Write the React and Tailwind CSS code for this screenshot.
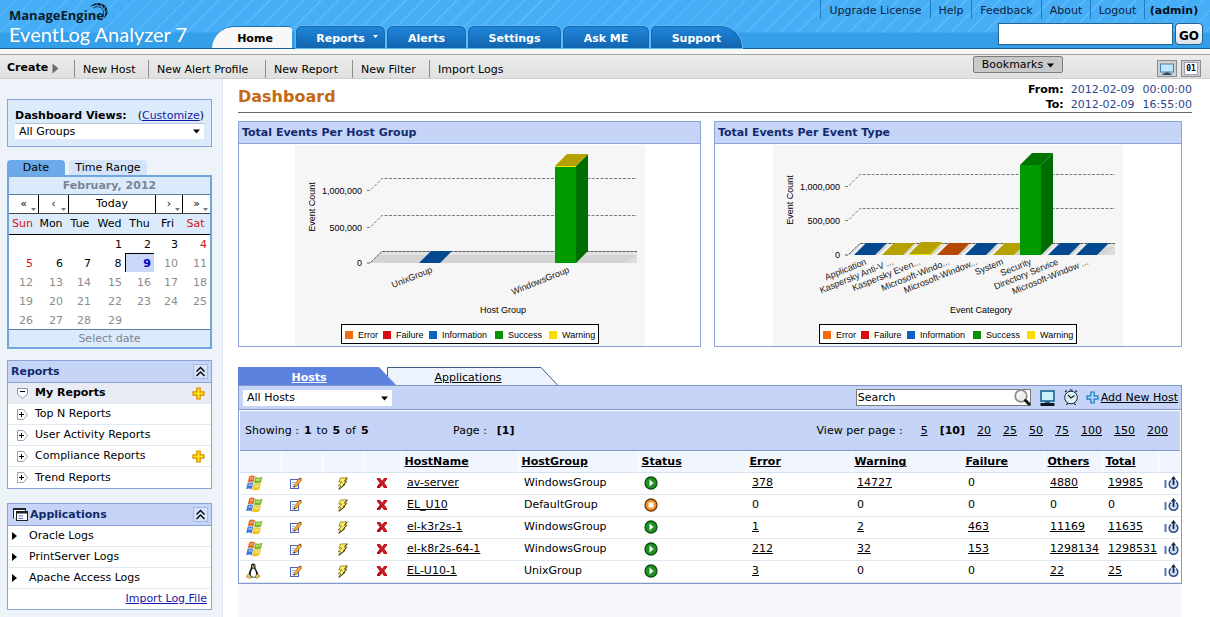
import React from 'react';

const SANS = "font-['DejaVu_Sans',Verdana,sans-serif]";

/* ---------- icons ---------- */

function WindowsIcon() {
  return (
    <svg width="17" height="16" viewBox="0 0 17 16" aria-label="Windows host">
      <path d="M3.200 1.400C5.100 0 7 .3 9 1.400L7.600 7.700C5.800 6.600 4 6.500 1.700 7.700Z" fill="#e2631f" />
      <path d="M9 1.800C11.500 3 13.700 3 16.500 1.500L15 7.700C12.600 9 10.100 8.900 7.600 7.700Z" fill="#7cb82c" />
      <path d="M1.600 7.900C3.700 6.700 5.700 6.900 7.600 8L6 14.400C4.100 13.200 2.200 13.100.1 14.200Z" fill="#3f74d9" />
      <path d="M7.600 8C10 9.200 12.400 9.200 15 7.900L13.500 14.200C10.800 15.700 8.500 15.600 6 14.400Z" fill="#f2c31c" />
      <path d="M4.200 2.300C5.600 1.600 6.600 1.700 7.700 2.300L7 5C6 4.400 5 4.400 3.500 5Z" fill="#f39b62" />
      <path d="M10.200 3.500C12 4.200 13.200 4.100 15 3.300L14.400 5.300C12.600 6 11.500 5.900 9.700 5.400Z" fill="#b5e06b" />
      <path d="M2.700 8.900C4 8.400 5 8.500 6.300 9L5.700 11.200C4.500 10.700 3.500 10.700 2.100 11.200Z" fill="#8fb3f5" />
      <path d="M8.800 9.800C10.400 10.400 11.800 10.400 13.500 9.700L12.900 12C11.200 12.700 9.900 12.600 8.200 12Z" fill="#fbe26b" />
      <path d="M9.200 1.500L6 14.400M1.600 7.900C3.700 6.700 5.700 6.900 7.600 8C10 9.200 12.400 9.200 15 7.900" fill="none" stroke="#f7f1e4" strokeWidth=".7" />
    </svg>
  );
}

function LinuxIcon() {
  return (
    <svg width="15" height="16" viewBox="0 0 15 16" aria-label="Linux host">
      <path d="M7.200.5C5.500.5 4.900 1.700 5 3.200C5.100 5 4.800 5.500 3.900 7C3 8.500 2.600 10.500 2.800 12L5 14.500H10L12 12C12.200 10 11.400 8.300 10.500 7C9.600 5.700 9.500 5 9.500 3.200C9.500 1.500 8.800.5 7.200.5Z" fill="#161616" />
      <path d="M7.200 5.600C6.100 5.900 5.900 7 5.100 8.600C4.500 10.200 4.800 12.300 5.600 13.300C6.600 14 8.600 14 9.500 13.200C10.200 12 10.200 10 9.600 8.500C9 7 8.500 5.800 7.200 5.600Z" fill="#fff" />
      <path d="M6 3.900L7.300 3.400L8.700 4L7.300 5.200Z" fill="#e6b422" />
      <circle cx="6.500" cy="2.900" r=".6" fill="#fff" />
      <circle cx="8.100" cy="2.900" r=".6" fill="#fff" />
      <path d="M2.800 10.800L5.600 14.200C5.400 15.600 3.600 15.500 2.600 15L.6 14.300C.3 13.500.9 13 1 12.200Z" fill="#dfc262" stroke="#8a7020" strokeWidth=".5" />
      <path d="M11.700 10.900L9.700 12.500L9.300 14.400C9.600 15.600 11.200 15.500 12 14.700L14.200 13.300C13.600 12.700 13.200 12.300 13 11.500Z" fill="#dfc262" stroke="#8a7020" strokeWidth=".5" />
    </svg>
  );
}

function EditIcon() {
  return (
    <svg width="13" height="13" viewBox="0 0 13 13">
      <rect x="1.500" y="2.500" width="8" height="9" fill="#fff" stroke="#4a63b5" />
      <path d="M3 5.500H6M3 7.500H5M3 9.500H5" stroke="#9fb0dc" />
      <path d="M4.800 10.300L5.500 7.700L10 1.300L12.400 3.100L7.600 9.300Z" fill="#f9ab2b" stroke="#7a4a10" strokeWidth=".6" />
      <path d="M4.600 10.500L5.300 8.800L6.400 9.600Z" fill="#222" />
      <path d="M10.200 1.300L11 .5L12.800 1.900L12.200 2.800Z" fill="#7b3b16" />
    </svg>
  );
}

function BoltIcon() {
  return (
    <svg width="13" height="13" viewBox="0 0 13 13">
      <path d="M4.500 1L11.300 .8L8.300 4.300L10.800 4.100L7.300 7.500L8.800 7.600L2.600 12.300L4.700 8.700L2 8.800L6 5L2.800 5.100Z" fill="#fff05a" stroke="#6e6312" strokeWidth=".7" strokeLinejoin="round" />
      <path d="M10.900 4.300L7.700 7.600M8.700 7.800L3 12.200M11.200 1L8.700 4" stroke="#1f1c05" strokeWidth=".9" />
    </svg>
  );
}

function DeleteIcon() {
  return (
    <svg width="12" height="12" viewBox="0 0 12 12">
      <path d="M1 1H4L6 3.700L8.200 1H11V2.500L8.200 5.800L11 9.400V11H8L6 8.200L3.800 11H1V9.500L3.800 5.900L1 2.500Z" fill="#b80d14" />
      <path d="M2 1.500L9.800 10.300M9.800 1.700L6.800 5" stroke="#e0474a" strokeWidth=".8" />
    </svg>
  );
}

function StatusIcon({ running }) {
  return running ? (
    <svg width="14" height="14" viewBox="0 0 14 14" aria-label="Running">
      <circle cx="7" cy="7" r="6" fill="#1f9423" stroke="#0c4d10" strokeWidth="1.300" />
      <path d="M5.500 3.500L9.500 7L5.500 10.500Z" fill="#fff" />
    </svg>
  ) : (
    <svg width="14" height="14" viewBox="0 0 14 14" aria-label="Stopped">
      <circle cx="7" cy="7" r="6" fill="#f3922a" stroke="#6b3706" strokeWidth="1.300" />
      <rect x="4.500" y="4.500" width="5" height="5" fill="#fff" />
    </svg>
  );
}

function PowerIcon() {
  return (
    <svg width="15" height="14" viewBox="0 0 15 14">
      <path d="M1.500 4V12" stroke="#5b7bab" strokeWidth="2" />
      <path d="M6.900 4.600A4.300 4.300 0 1 0 12.100 4.600" fill="#cfe0f6" stroke="#2b4a84" strokeWidth="1.500" />
      <path d="M9.500 2V9" stroke="#14264f" strokeWidth="1.800" />
      <path d="M6.800 3.400L9.500 0L12.200 3.400Z" fill="#14264f" />
    </svg>
  );
}

function PlusIcon({ blue }) {
  return (
    <svg width="13" height="13" viewBox="0 0 13 13">
      <path d="M4.800 1H8.200V4.800H12V8.200H8.200V12H4.800V8.200H1V4.800H4.800Z" fill={blue ? '#a9d8fb' : '#ffe614'} stroke={blue ? '#2377c4' : '#d98b00'} strokeWidth="1.200" />
    </svg>
  );
}

function ExpandIcon() {
  return (
    <svg width="11" height="11" viewBox="0 0 11 11">
      <path d="M.5.500H6.500L10.500 5.500L6.500 10.500H.5Z" fill="#fff" stroke="#93a3b3" />
      <path d="M2 5.500H7M4.500 3V8" stroke="#000" />
    </svg>
  );
}

function OpenIcon() {
  return (
    <svg width="11" height="11" viewBox="0 0 11 11">
      <path d="M.5.500H10.500V6L5.500 10.500L.5 6Z" fill="#fff" stroke="#8595a8" />
      <path d="M3 3.500H8" stroke="#000" />
    </svg>
  );
}

function CollapseIcon() {
  return (
    <svg width="15" height="15" viewBox="0 0 15 15">
      <rect x=".5" y=".5" width="14" height="14" fill="#d6e1fb" stroke="#7f98d4" strokeDasharray="1 1" />
      <path d="M3.500 7.500L7.500 3.500L11.500 7.500M3.500 12L7.500 8L11.500 12" fill="none" stroke="#000" strokeWidth="1.400" />
    </svg>
  );
}

function WindowsStackIcon() {
  return (
    <svg width="15" height="13" viewBox="0 0 15 13">
      <path d="M.5 10.500V.5H12.500V3" fill="#fff" stroke="#222" />
      <path d="M0 1H13" stroke="#222" strokeWidth="2" />
      <rect x="3.500" y="3.500" width="11" height="9" fill="#fff" stroke="#222" />
      <path d="M3 4.500H15" stroke="#222" strokeWidth="2" />
      <path d="M5.500 8H10M5.500 10.500H10" stroke="#5479b5" />
    </svg>
  );
}

function MonitorIcon({ small }) {
  return small ? (
    <svg width="16" height="12" viewBox="0 0 16 12">
      <rect x="1.500" y="1" width="13" height="8" fill="#bfe6fb" stroke="#4583ad" />
      <path d="M6 9.500H10V10.500H12.500V12H3.500V10.500H6Z" fill="#24465c" />
    </svg>
  ) : (
    <svg width="15" height="16" viewBox="0 0 15 16">
      <rect x="1" y="1" width="13" height="10" fill="#c9f2fb" stroke="#17658f" strokeWidth="1.600" />
      <path d="M5 11.500H10V13H5Z" fill="#17658f" />
      <path d="M.5 13H14.500V16H.5Z" fill="#0b1824" />
    </svg>
  );
}

function ClockIcon() {
  return (
    <svg width="16" height="17" viewBox="0 0 16 17">
      <circle cx="8" cy="8.500" r="6.300" fill="#e3f3f6" stroke="#10222c" strokeWidth="1" />
      <path d="M5 6L8 9L11.500 6.500" fill="none" stroke="#10222c" strokeWidth="1.200" />
      <path d="M2 3L3.800 1.500M14 3L12.200 1.500M3.500 16L4.700 14.300M12.500 16L11.300 14.300" stroke="#10222c" strokeWidth="1.200" />
      <path d="M6.500 1H9.500" stroke="#10222c" />
    </svg>
  );
}

function SearchIcon() {
  return (
    <svg width="17" height="17" viewBox="0 0 17 17">
      <circle cx="7" cy="7" r="5.800" fill="#efefef" stroke="#909090" strokeWidth="1.800" />
      <path d="M4 6.500A3.300 3.300 0 0 1 7.500 3.600" fill="none" stroke="#fff" strokeWidth="1.500" />
      <path d="M11.500 11.500L15 15" stroke="#111" strokeWidth="3" strokeLinecap="round" />
    </svg>
  );
}

function Caret({ className }) {
  return (
    <svg width="9" height="5" viewBox="0 0 9 5" className={className}>
      <path d="M0 0H9L4.500 5Z" fill="currentColor" />
    </svg>
  );
}

function LogoArc() {
  return (
    <svg width="21" height="18" viewBox="0 0 21 18" className="absolute -right-1.5 -top-1.5">
      <path d="M1 5C5 0 12-.5 16.500 4C20 8.500 19 13.500 14.500 16.500C17 12 16.800 8.500 14 5.500C11 2.500 5.500 2.500 1 5Z" fill="#0b1c2c" />
      <path d="M4 6C8 3.500 12.500 5 14 8C15.200 10.500 14.800 13 13.500 15" fill="none" stroke="#0b1c2c" strokeWidth=".9" />
      <path d="M7.500 1.500L9.500 5M12 1.200L13.500 6M16.500 4L14.500 8.500M18.500 8L15.500 11.500" stroke="#4cb0f5" strokeWidth=".8" />
    </svg>
  );
}

/* ---------- header ---------- */

const TABS = [
  ['Alerts', 'w-[79px]'],
  ['Settings', 'w-[93px]'],
  ['Ask ME', 'w-[86px]'],
];
const TAB = 'h-[22px] border border-b-0 border-[#1569b0] bg-linear-to-b from-[#1f86da] to-[#1264ae] pt-[3px] text-center font-bold text-white shadow-[0_0_0_1px_#5cbcf5]';
const LINKS = [
  ['Upgrade License', 'w-[110px]'],
  ['Help', 'w-[41px]'],
  ['Feedback', 'w-[70px]'],
  ['About', 'w-[49px]'],
  ['Logout', 'w-[54px]'],
];

function Header() {
  return (
    <header className="flex h-[49px] items-end border-b border-[#14639f] bg-[linear-gradient(to_bottom,transparent_0_32px,#359ee9_33px),repeating-linear-gradient(135deg,#46aef7_0_10px,#5bb9f9_11px_12px)]">
      <div className="w-[212px] shrink-0 self-start pl-[9px] pt-2">
        <div className="relative inline-block font-['Open_Sans',sans-serif] text-[13px] font-bold leading-[15px] text-[#0b1c2c]">
          ManageEngine
          <LogoArc />
        </div>
        <div className="whitespace-nowrap font-['Lato',sans-serif] text-[20px] leading-[20px] text-white">EventLog Analyzer 7</div>
      </div>
      <nav className="flex shrink-0 gap-0.5">
        <button className="mr-0.5 h-[22px] w-20 rounded-tl-[24px] rounded-tr border-t border-[#1c75ba] bg-[#f8f8f8] pl-1.5 pt-[3px] text-center font-bold text-black">Home</button>
        <button className={`${TAB} relative w-[89px] rounded-t-md`}>
          Reports
          <svg width="5" height="3" viewBox="0 0 5 3" className="absolute right-1.5 top-2"><path d="M0 0H5L2.500 3Z" fill="#fff" /></svg>
        </button>
        {TABS.map(([t, w]) => (
          <button key={t} className={`${TAB} ${w} rounded-t-md`}>{t}</button>
        ))}
        <button className={`${TAB} w-[91px] rounded-tl-md rounded-tr-[28px]`}>Support</button>
      </nav>
      <div className="ml-auto flex flex-col items-end gap-1 self-start pr-[7px]">
        <div className="flex h-[19px] text-center text-[#0d2440]">
          {LINKS.map(([l, w]) => (
            <a key={l} href="#" className={`${w} border-l border-[#1f7dc4] leading-[21px]`}>{l}</a>
          ))}
          <span className="w-[59px] border-l border-[#1f7dc4] font-bold leading-[21px] text-[#04101f]">(admin)</span>
        </div>
        <div className="flex gap-0.5">
          <input aria-label="Search logs" className="h-[22px] w-[175px] border border-[#24648f] bg-white px-1" />
          <button className="h-[22px] w-[28px] rounded border border-[#24648f] bg-linear-to-b from-white to-[#d9e2ea] pt-1 text-[12px] font-bold text-black">GO</button>
        </div>
      </div>
    </header>
  );
}

const ACTIONS = [
  ['New Host', 'w-[74px]'],
  ['New Alert Profile', 'w-[117px]'],
  ['New Report', 'w-[87px]'],
  ['New Filter', 'w-[77px]'],
  ['Import Logs', 'w-[90px]'],
];

function Toolbar() {
  return (
    <div className="bg-[#f7f7f7] pt-[5px]">
      <div className="flex h-[25px] items-center border-b border-t border-b-[#cfcfcf] border-t-[#a2a2a2] bg-linear-to-b from-[#ececec] to-[#e0e0e0] pl-[7px] pr-[9px]">
        <button className="flex w-[67px] items-center gap-1 pt-[3px] font-bold">
          Create
          <svg width="7" height="11" viewBox="0 0 7 11"><path d="M.5.500L6.500 5.500L.5 10.500Z" fill="#6d6d6d" /></svg>
        </button>
        {ACTIONS.map(([l, w]) => (
          <a key={l} href="#" className={`${w} mt-1 h-[18px] border-l border-[#8d8d8d] pl-2 leading-[20px]`}>{l}</a>
        ))}
        <button className="mb-1 ml-auto flex h-[17px] w-[90px] items-center justify-center gap-1 rounded-xs border border-[#7c7c7c] bg-[#c9c9c9] pt-px">
          Bookmarks <Caret className="w-[7px]" />
        </button>
        <div className="ml-[94px] mt-1 flex gap-1">
          <button aria-label="Monitor view" className="flex h-[17px] w-5 items-center justify-center border border-[#8c8c8c] bg-[#cfcfcf]"><MonitorIcon small /></button>
          <button aria-label="Raw logs" className="flex h-[17px] w-5 items-center justify-center border border-[#8c8c8c] bg-[#cfcfcf]">
            <span className="flex h-[13px] w-[14px] justify-center border border-[#9aa3c4] bg-white font-['DejaVu_Sans_Mono',monospace] text-[8px] font-bold leading-[11px]">01</span>
          </button>
        </div>
      </div>
    </div>
  );
}

/* ---------- sidebar ---------- */

const WEEKS = [
  ['', '', '', 1, 2, 3, 4],
  [5, 6, 7, 8, 9, 10, 11],
  [12, 13, 14, 15, 16, 17, 18],
  [19, 20, 21, 22, 23, 24, 25],
  [26, 27, 28, 29, '', '', ''],
];

function dayClass(d) {
  if (d === 9) return 'border-l border-t border-black bg-[#c9d8f8] font-bold text-[#0000c8]';
  if (d > 9) return 'text-[#8c8c8c]';
  if (d === 4 || d === 5) return 'text-[#d01515]';
  return 'text-black';
}

function Calendar() {
  const nav = 'relative h-[18px] border-l border-black first:border-l-0';
  return (
    <section>
      <div className="flex gap-1">
        <button className="h-[15px] w-[58px] rounded-t bg-[#6ca9e9] leading-[16px]">Date</button>
        <button className="h-[15px] w-[78px] rounded-t bg-[#d6e4fa] leading-[16px]">Time Range</button>
      </div>
      <div className="border-2 border-[#70a5de] bg-white">
        <div className="h-[18px] border-b border-[#5d7ea3] bg-[#dcebfc] text-center font-bold leading-[18px] text-[#7a8594]">February, 2012</div>
        <div className="grid grid-cols-[29fr_30fr_87fr_27fr_28fr] border-b border-[#444] leading-[18px]">
          {['«', '‹', 'Today', '›', '»'].map((s) => (
            <button key={s} className={nav}>
              {s}
              {s !== 'Today' && <svg width="5" height="3" viewBox="0 0 5 3" className="absolute bottom-0.5 right-0.5"><path d="M0 0H5L2.500 3Z" fill="#777" /></svg>}
            </button>
          ))}
        </div>
        <table className="w-full table-fixed border-collapse">
          <colgroup>
            <col className="w-[27px]" /><col className="w-[30px]" /><col className="w-[28px]" /><col className="w-[31px]" /><col className="w-[29px]" /><col className="w-[27px]" /><col className="w-[29px]" />
          </colgroup>
          <thead>
            <tr className="h-[20px] border-b border-black bg-[#dcebfc]">
              {['Sun', 'Mon', 'Tue', 'Wed', 'Thu', 'Fri', 'Sat'].map((d) => (
                <th key={d} className={`p-0 text-center font-normal ${d[0] === 'S' ? 'text-[#d01515]' : ''}`}>{d}</th>
              ))}
            </tr>
          </thead>
          <tbody>
            {WEEKS.map((w, i) => (
              <tr key={i} className="h-[19px]">
                {w.map((d, j) => <td key={j} className={`p-0 pr-[3px] pt-0.5 text-right ${dayClass(d)}`}>{d}</td>)}
              </tr>
            ))}
          </tbody>
        </table>
        <button className="block h-[18px] w-full border-t border-[#5d7ea3] bg-[#dcebfc] leading-[18px] text-[#7a8594]">Select date</button>
      </div>
    </section>
  );
}

function SidePanel({ title, icon, children }) {
  return (
    <section className="border border-[#8ba3d6] bg-white">
      <h2 className="flex h-[22px] items-center border-b border-[#8ba3d6] bg-[#c5d4f7] pl-[3px] pr-[3px] font-bold text-[#122a6b]">
        {icon}
        {title}
        <button aria-label={`Collapse ${title}`} className="ml-auto"><CollapseIcon /></button>
      </h2>
      {children}
    </section>
  );
}

function Sidebar() {
  const reports = [
    ['My Reports', true],
    ['Top N Reports', false],
    ['User Activity Reports', false],
    ['Compliance Reports', true],
    ['Trend Reports', false],
  ];
  return (
    <aside className="w-[223px] shrink-0 border-r border-[#dfe6f2] bg-[#eef3fa] pb-1 pl-[7px] pr-[10px] pt-5">
      <section className="h-12 border border-[#8ba3d6] bg-[#dcebfc] px-[7px] pt-2">
        <div className="flex justify-between whitespace-nowrap leading-[15px]">
          <label htmlFor="views" className="font-bold">Dashboard Views:</label>
          <span>(<a href="#" className="text-[#1818a8] underline">Customize</a>)</span>
        </div>
        <div className="relative">
          <select id="views" className="block h-4 w-full appearance-none border-t border-[#b7c4d8] bg-white pl-1 leading-[14px]"><option>All Groups</option></select>
          <Caret className="pointer-events-none absolute right-1 top-1.5 w-[7px]" />
        </div>
      </section>
      <div className="mt-[13px]"><Calendar /></div>
      <div className="mt-[11px]">
        <SidePanel title="Reports">
          <ul>
            {reports.map(([r, plus], i) => (
              <li key={r} className={`flex h-[21px] items-center border-b border-[#dfe8f3] pl-[9px] pr-[6px] last:border-b-0 ${i === 0 ? 'bg-[#e9ecf4] font-bold' : ''}`}>
                <button aria-label={`Toggle ${r}`} className="mr-[7px]">{i === 0 ? <OpenIcon /> : <ExpandIcon />}</button>
                <a href="#">{r}</a>
                {plus && <button aria-label={`Add to ${r}`} className="ml-auto"><PlusIcon /></button>}
              </li>
            ))}
          </ul>
        </SidePanel>
      </div>
      <div className="mt-[14px]">
        <SidePanel title="Applications" icon={<span className="mr-0.5 pl-0.5"><WindowsStackIcon /></span>}>
          <ul>
            {['Oracle Logs', 'PrintServer Logs', 'Apache Access Logs'].map((r) => (
              <li key={r} className="flex h-[21px] items-center gap-3 border-b border-[#dfe8f3] pl-1">
                <svg width="5" height="8" viewBox="0 0 5 8"><path d="M0 0L5 4L0 8Z" fill="#000" /></svg>
                <a href="#">{r}</a>
              </li>
            ))}
          </ul>
          <div className="pr-1 text-right leading-[20px]"><a href="#" className="text-[#1818a8] underline">Import Log File</a></div>
        </SidePanel>
      </div>
    </aside>
  );
}

/* ---------- charts ---------- */

const LEGEND = [
  ['Error', '#f26c0d', 50],
  ['Failure', '#d9090f', 88],
  ['Information', '#0b62c1', 134],
  ['Success', '#079107', 200],
  ['Warning', '#fadd00', 254],
];

function Chart({ title, grid, base, axis, labels, children }) {
  return (
    <svg width="350" height="201" viewBox="0 0 350 201" role="img" aria-label={title} className="mx-auto block font-['Liberation_Sans',Arial,sans-serif]">
      <rect width="350" height="201" fill="#f6f6f6" />
      {grid.map(([y, label]) => (
        <g key={label}>
          <path d={`M72 ${y + 12}.5H75L87 ${y}.5H342`} fill="none" stroke="#6d6d6d" strokeDasharray="3 1.500" strokeWidth=".9" />
          <text x="67" y={y + 16} fontSize="9" textAnchor="end">{label}</text>
        </g>
      ))}
      <path d={`M75 ${base}L87 ${base - 12}H342V${base}Z`} fill="#d4d4d4" />
      <path d={`M83 ${base - 8}L87 ${base - 12}H342V${base - 8}Z`} fill="#e2e2e2" />
      <path d={`M330 ${base}L342 ${base - 8}V${base}Z`} fill="#dedede" />
      <path d={`M72 ${base}H75L87 ${base - 11.5}H342`} fill="none" stroke="#555" strokeDasharray="3 1" />
      <text x="67" y={base + 3} fontSize="9" textAnchor="end">0</text>
      {children}
      <text transform={`translate(20 ${grid[1][0] - 8}) rotate(-90)`} fontSize="9" textAnchor="middle">Event Count</text>
      {labels.map(([t, x], i) => (
        <text key={i} transform={`translate(${x} ${base + 9}) rotate(-22)`} fontSize="9" textAnchor="end" fill="#222">{t}</text>
      ))}
      <text x="208" y="168" fontSize="9" textAnchor="middle">{axis}</text>
      <rect x="46.500" y="179.500" width="257" height="19" fill="#fff" stroke="#000" />
      {LEGEND.map(([t, c, x]) => (
        <g key={t}>
          <rect x={x} y="186" width="8" height="8" fill={c} />
          <text x={x + 13} y="193" fontSize="9">{t}</text>
        </g>
      ))}
    </svg>
  );
}

function HostGroupChart() {
  return (
    <Chart title="Total Events Per Host Group" grid={[[33, '1,000,000'], [70, '500,000']]} base={118} axis="Host Group" labels={[['UnixGroup', 138], ['WindowsGroup', 275]]}>
      <path d="M124 118L136 106H157L145 118Z" fill="#04498f" />
      <path d="M260 21H281V118H260Z" fill="#009a00" />
      <path d="M281 21L293 9V106L281 118Z" fill="#006e00" />
      <path d="M260 21L272 9H293L281 21Z" fill="#b5a100" />
      <path d="M260 21.500H281" stroke="#e8e600" />
    </Chart>
  );
}

const TILES = [
  [81, '#04498f'], [109, '#b5a100'], [136, '#b5a100'], [164, '#b54a04'], [192, '#04498f'],
  [220, '#b5a100'], [275, '#04498f'], [303, '#04498f'],
];

function EventTypeChart() {
  return (
    <Chart
      title="Total Events Per Event Type"
      grid={[[29, '1,000,000'], [63, '500,000']]}
      base={110}
      axis="Event Category"
      labels={[['Application', 94], ['Kaspersky Anti-V ...', 121], ['Kaspersky Even...', 148], ['Microsoft-Windo...', 177], ['Microsoft-Window...', 205], ['System', 231], ['Security', 259], ['Directory Service', 286], ['Microsoft-Window ...', 316]]}
    >
      {TILES.map(([x, c]) => (
        <g key={x}>
          <path d={`M${x - 4} 110L${x + 8} 99H${x + 12}L${x} 110Z`} fill="#f0f0f0" />
          <path d={`M${x} 110L${x + 12} 98H${x + 33}L${x + 21} 110Z`} fill={c} />
        </g>
      ))}
      <path d="M136 109L148 97H169L157 109Z" fill="#b5a100" />
      <path d="M136 109.500H157L169 97.500" stroke="#e8e000" fill="none" />
      <path d="M247 20H268V110H247Z" fill="#009a00" />
      <path d="M268 20L280 8V98L268 110Z" fill="#006b00" />
      <path d="M247 20L259 8H280L268 20Z" fill="#007300" />
    </Chart>
  );
}

function ChartCard({ title, children }) {
  return (
    <section className="border border-[#8ba3d6] bg-white">
      <h2 className="h-[22px] border-b border-[#8ba3d6] bg-[#c5d4f7] pl-[3px] font-bold leading-[21px] text-[#122a6b]">{title}</h2>
      <div className="pt-px">{children}</div>
    </section>
  );
}

/* ---------- hosts table ---------- */

const HOSTS = [
  ['win', 'av-server', 'WindowsGroup', true, '378', '14727', '0', '4880', '19985'],
  ['win', 'EL_U10', 'DefaultGroup', false, '0', '0', '0', '0', '0'],
  ['win', 'el-k3r2s-1', 'WindowsGroup', true, '1', '2', '463', '11169', '11635'],
  ['win', 'el-k8r2s-64-1', 'WindowsGroup', true, '212', '32', '153', '1298134', '1298531'],
  ['linux', 'EL-U10-1', 'UnixGroup', true, '3', '0', '0', '22', '25'],
];
const COLUMNS = ['', '', '', '', 'HostName', 'HostGroup', 'Status', 'Error', 'Warning', 'Failure', 'Others', 'Total', ''];

function HostTable() {
  return (
    <table className="w-full table-fixed border-collapse bg-white">
      <colgroup>
        <col className="w-[41px]" /><col className="w-[41px]" /><col className="w-[41px]" /><col className="w-[38px]" />
        <col className="w-[117px]" /><col className="w-[120px]" /><col className="w-[108px]" /><col className="w-[105px]" />
        <col className="w-[111px]" /><col className="w-[82px]" /><col className="w-[58px]" /><col className="w-[56px]" /><col className="w-[22px]" />
      </colgroup>
      <thead>
        <tr className="h-[21px] border-b border-[#d3e0f0] bg-[#f0f5fe]">
          {COLUMNS.map((c, i) => (
            <th key={i} className="border-l border-white p-0 pl-[3px] pt-0.5 text-left font-bold first:border-l-0">
              {c && <a href="#" className="underline">{c}</a>}
            </th>
          ))}
        </tr>
      </thead>
      <tbody>
        {HOSTS.map(([os, name, group, running, ...nums]) => (
          <tr key={name} className="h-[22px] border-b border-[#dde8f2]">
            <td className="p-0 pl-1.5">{os === 'win' ? <WindowsIcon /> : <LinuxIcon />}</td>
            <td className="p-0 pl-2"><button aria-label={`Edit ${name}`} className="block"><EditIcon /></button></td>
            <td className="p-0 pl-[14px]"><button aria-label={`Poll ${name}`} className="block"><BoltIcon /></button></td>
            <td className="p-0 pl-[13px]"><button aria-label={`Delete ${name}`} className="block"><DeleteIcon /></button></td>
            <td className="p-0 pl-1.5"><a href="#" className="underline">{name}</a></td>
            <td className="p-0 pl-1.5">{group}</td>
            <td className="p-0 pl-1.5"><StatusIcon running={running} /></td>
            {nums.map((n, i) => (
              <td key={i} className="p-0 pl-1.5">{n === '0' ? n : <a href="#" className="underline">{n}</a>}</td>
            ))}
            <td className="p-0 pl-1.5"><button aria-label={`Restart ${name}`} className="block"><PowerIcon /></button></td>
          </tr>
        ))}
      </tbody>
    </table>
  );
}

function HostsSection() {
  return (
    <section>
      <div className="flex h-[18px] leading-[18px]">
        <button className="w-[158px] bg-[#5b82de] pr-4 pt-0.5 font-bold text-white underline [clip-path:polygon(0_0,calc(100%_-_17px)_0,100%_100%,0_100%)]">Hosts</button>
        <div className="-ml-[9px] flex">
          <svg width="9" height="18" viewBox="0 0 9 18">
            <path d="M.5 .5H9V18L.5 9Z" fill="#edf3fc" />
            <path d="M.5 9V.5H9" fill="none" stroke="#3c5a88" />
          </svg>
          <button className="w-[144px] border-t border-[#3c5a88] bg-[#edf3fc] pt-px leading-[18px] underline">Applications</button>
          <svg width="18" height="18" viewBox="0 0 18 18">
            <path d="M0 0H.5L17.500 18H0Z" fill="#edf3fc" />
            <path d="M0 .5H1L17.500 18" fill="none" stroke="#3c5a88" />
          </svg>
        </div>
      </div>
      <div className="border border-[#7f98c9] bg-[#c5d4f7]">
        <div className="flex h-[24px] items-center border-b border-[#7f98c9] pl-1 pr-[3px]">
          <div className="relative w-[149px]">
            <select aria-label="Host filter" className="block h-4 w-full appearance-none bg-white pl-1 leading-[14px]"><option>All Hosts</option></select>
            <Caret className="pointer-events-none absolute right-1 top-1.5 w-[7px]" />
          </div>
          <div className="relative ml-auto w-[175px]">
            <input aria-label="Search hosts" defaultValue="Search" className="block h-[17px] w-full border border-[#7b7b7b] bg-white pl-px" />
            <button aria-label="Search" className="absolute right-0 top-0"><SearchIcon /></button>
          </div>
          <button aria-label="Monitor" className="ml-[9px]"><MonitorIcon /></button>
          <button aria-label="Schedule" className="ml-2"><ClockIcon /></button>
          <a href="#" className="ml-[7px] flex items-center gap-0.5"><PlusIcon blue /><span className="underline">Add New Host</span></a>
        </div>
        <div className="border border-b-0 border-white">
          <div className="flex h-[40px] items-center border-b border-[#7f98c9] pl-[5px] pr-3">
            <span className="flex w-[208px] gap-[5px]"><span>Showing :</span><b>1</b>to<b>5</b>of<b>5</b></span>
            <span className="flex gap-2.5">Page : <b>[1]</b></span>
            <div className="ml-auto flex gap-3">
              <span className="mr-1.5">View per page :</span>
              {['5', '10', '20', '25', '50', '75', '100', '150', '200'].map((n) =>
                n === '10' ? <b key={n}>[10]</b> : <a key={n} href="#" className="underline">{n}</a>
              )}
            </div>
          </div>
          <HostTable />
        </div>
      </div>
    </section>
  );
}

export default function App() {
  return (
    <div className={`flex min-h-screen flex-col bg-white text-[11px] leading-[14px] text-black ${SANS} [&_svg]:shrink-0`}>
      <Header />
      <Toolbar />
      <div className="flex grow">
        <Sidebar />
        <main className="flex min-w-0 grow flex-col pl-[15px] pr-[28px] pt-[3px]">
          <div className="-mr-[10px] flex items-center justify-between border-b border-[#666]">
            <h1 className="text-[16px] font-bold leading-[20px] text-[#c46a14]">Dashboard</h1>
            <dl className="grid grid-cols-[auto_auto] gap-x-[7px] text-right leading-[15px]">
              <dt className="font-bold">From:</dt>
              <dd className="flex gap-2 text-[#2b4788]"><span>2012-02-09</span><span>00:00:00</span></dd>
              <dt className="font-bold">To:</dt>
              <dd className="flex gap-2 text-[#2b4788]"><span>2012-02-09</span><span>16:55:00</span></dd>
            </dl>
          </div>
          <div className="mt-2 grid grid-cols-[463fr_468fr] gap-[13px]">
            <ChartCard title="Total Events Per Host Group"><HostGroupChart /></ChartCard>
            <ChartCard title="Total Events Per Event Type"><EventTypeChart /></ChartCard>
          </div>
          <div className="mt-5"><HostsSection /></div>
          <div className="grow bg-[#f6f8fd]" />
        </main>
      </div>
    </div>
  );
}
